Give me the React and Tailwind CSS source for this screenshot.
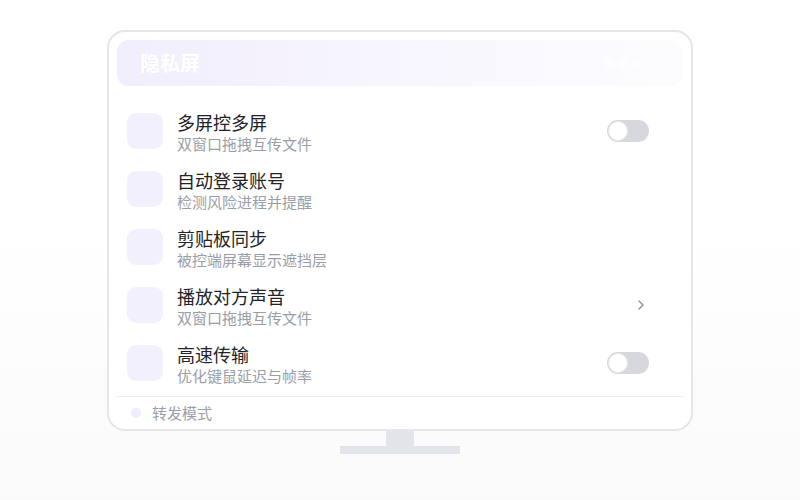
import React from 'react';

const rows = [
  { title: '多屏控多屏', desc: '双窗口拖拽互传文件', action: 'toggle' },
  { title: '自动登录账号', desc: '检测风险进程并提醒' },
  { title: '剪贴板同步', desc: '被控端屏幕显示遮挡层' },
  { title: '播放对方声音', desc: '双窗口拖拽互传文件', action: 'chevron' },
  { title: '高速传输', desc: '优化键鼠延迟与帧率', action: 'toggle' },
];

function Toggle() {
  return (
    <div className="w-[42px] h-[22px] rounded-full bg-[#d6d8de] p-[1px] flex items-center">
      <div className="w-[20px] h-[20px] rounded-full bg-white border border-[#e5e7eb]" />
    </div>
  );
}

export default function App() {
  return (
    <div
      className="w-[800px] h-[500px] bg-gradient-to-b from-white from-45% to-[#fafafb] flex flex-col items-center pt-[30px]"
      style={{ fontFamily: '"Noto Sans CJK SC", "Noto Sans", sans-serif' }}
    >
      {/* Monitor */}
      <div className="w-[586px] h-[401px] rounded-[18px] border-2 border-[#e4e6ea] bg-white px-2 pt-2 flex flex-col">
        {/* Header */}
        <div className="h-[46px] rounded-[12px] bg-gradient-to-r from-[#f1edfd] via-[#f8f6fe] to-[#fcfcff] flex items-center px-[23px]">
          <span className="text-[20px] font-bold text-white leading-none">隐私屏</span>
          <div className="ml-auto flex gap-[5px] mr-[18px] opacity-60">
            <div className="w-[9px] h-[9px] rounded-full bg-white" />
            <div className="w-[9px] h-[9px] rounded-full bg-white" />
            <div className="w-[9px] h-[9px] rounded-full bg-white" />
          </div>
        </div>

        {/* Rows */}
        <div className="flex flex-col mt-[16px] px-[10px]">
          {rows.map((r) => (
            <div key={r.title} className="h-[58px] flex items-center">
              <div className="w-[36px] h-[36px] rounded-[9px] bg-[#f3f0fe] shrink-0" />
              <div className="ml-[14px] flex flex-col pt-[1px]">
                <span className="text-[18px] leading-[24px] text-[#222326]">{r.title}</span>
                <span className="text-[15px] leading-[20px] text-[#9a9ea6]">{r.desc}</span>
              </div>
              <div className="ml-auto mr-[24px]">
                {r.action === 'toggle' && <Toggle />}
                {r.action === 'chevron' && (
                  <svg width="8" height="12" viewBox="0 0 8 12" className="mr-[4px]">
                    <path d="M2 2 L6 6 L2 10" fill="none" stroke="#8a8f98" strokeWidth="1.4" strokeLinecap="round" strokeLinejoin="round" />
                  </svg>
                )}
              </div>
            </div>
          ))}
        </div>

        {/* Footer */}
        <div className="mt-[4px] border-t border-[#eceef1] flex-1 flex items-center px-[14px]">
          <div className="w-[10px] h-[10px] rounded-full bg-[#efebfd]" />
          <span className="ml-[11px] text-[15px] text-[#9a9ea6]">转发模式</span>
        </div>
      </div>

      {/* Stand */}
      <div className="w-[28px] h-[15px] bg-[#e1e4e8]" />
      <div className="w-[120px] h-[8px] bg-[#e1e4e8]" />
    </div>
  );
}
